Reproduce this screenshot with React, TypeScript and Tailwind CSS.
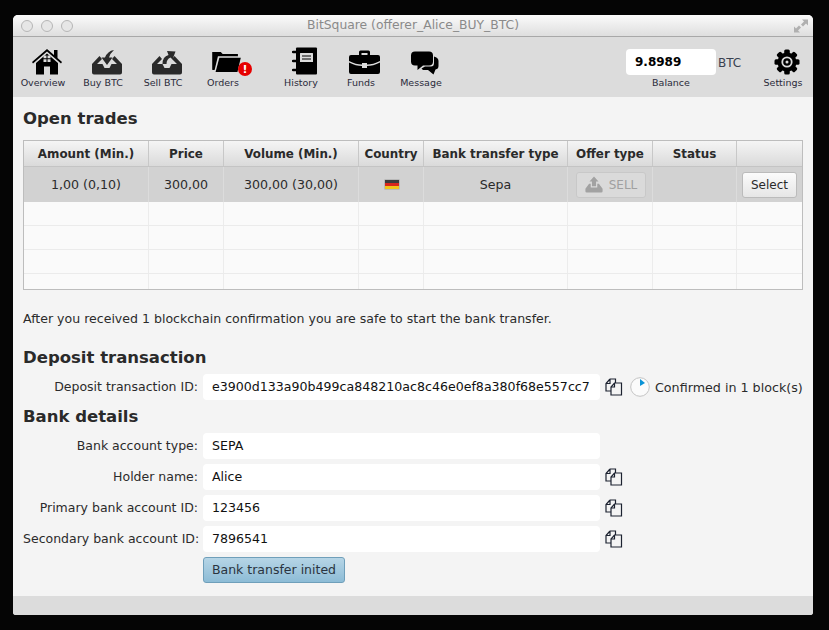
import React from "react";

const font = { fontFamily: '"DejaVu Sans", sans-serif' };

const HomeIcon = () => (
  <svg width="30" height="26" viewBox="0 0 30 26" fill="#000">
    <path d="M15 0 L0 13 L1 14.5 L15 2.5 L29 14.5 L30 13 L25.5 9 V1 H22 V6 Z" />
    <path d="M15 4.5 L4 14 V25.5 H12 V17.5 H18 V25.5 H26 V14 Z" />
    <path d="M11.5 6.5h3v2.7h-3zM15.5 6.5h3v2.7h-3zM11.5 10.2h3v2.7h-3zM15.5 10.2h3v2.7h-3z" fill="#dcdcdc" />
  </svg>
);

const TrayIcon = ({ up }: { up?: boolean }) => (
  <svg width="30" height="25" viewBox="0 0 30 25" fill="#2a2a2a">
    <path d="M7.5 6 L0 14 V22.5 Q0 24.5 2 24.5 H28 Q30 24.5 30 22.5 V14 L22.5 6 L20 9 L25 14 H19.5 L17.5 18 H12.5 L10.5 14 H5 L10 9 Z" />
    {up ? (
      <path d="M10.5 14 Q10.5 6.5 16.5 5 L15 1 L23.5 1.5 L20.5 9.5 L18.5 7.5 Q14.5 9 14.5 14 Z" />
    ) : (
      <path d="M22 0 Q15.5 1 13 7.5 H9.5 L15 15 L20.5 7.5 H17 Q18 3.5 22 0 Z" />
    )}
  </svg>
);

const FolderIcon = () => (
  <svg width="29" height="20" viewBox="0 0 30 21" fill="#000">
    <path d="M0 0 H9 L11 2 H27 V4.5 H6 L2.5 19 H1 Q0 19 0 18 Z" />
    <path d="M7.5 6 H30 L26.5 21 H3.5 Z" />
  </svg>
);

const AlertBadge = () => (
  <div className="flex h-[14px] w-[14px] items-center justify-center rounded-full bg-[#e60000] text-[11px] font-bold leading-none text-white">
    !
  </div>
);

const NotebookIcon = () => (
  <svg width="26" height="28" viewBox="0 0 26 28">
    <path d="M5 0.5 H24 Q25 0.5 25 1.5 V26.5 Q25 27.5 24 27.5 H5 Q4 27.5 4 26.5 V1.5 Q4 0.5 5 0.5 Z" fill="#000" />
    <rect x="8" y="6" width="13" height="9" rx="0.5" fill="#dcdcdc" />
    <path d="M10 9h9M10 12h9" stroke="#000" strokeWidth="1" />
    <path d="M1 5 H5 M1 14 H5 M1 23 H5" stroke="#000" strokeWidth="2.4" strokeLinecap="round" fill="none" />
  </svg>
);

const BriefcaseIcon = () => (
  <svg width="31" height="24" viewBox="0 0 31 24" fill="#000">
    <path d="M10 5 V2 Q10 0.5 11.5 0.5 H19.5 Q21 0.5 21 2 V5 H18.5 V3 H12.5 V5 Z" />
    <path d="M2 5 H29 Q31 5 31 7 V11 Q24 14.5 18 14.5 V13 H13 V14.5 Q7 14.5 0 11 V7 Q0 5 2 5 Z" />
    <path d="M0 12.5 Q7 16 13 16 V18 H18 V16 Q24 16 31 12.5 V22 Q31 24 29 24 H2 Q0 24 0 22 Z" />
  </svg>
);

const ChatIcon = () => (
  <svg width="28" height="24" viewBox="0 0 28 24" fill="#000">
    <path d="M23 5.5 Q27.5 6.5 27.5 10 V15 Q27.5 18 24.5 18.5 L22.5 23.5 L17 19 H12 L10.5 17.5 L14 15.5 H20 Q23 15.5 23 12 Z" />
    <path d="M4 0.5 H18 Q22 0.5 22 4.5 V10.5 Q22 14.5 18 14.5 H12 L6.5 19 L6.5 14.5 H4 Q0 14.5 0 10.5 V4.5 Q0 0.5 4 0.5 Z" />
  </svg>
);

const GearIcon = () => (
  <svg width="26" height="26" viewBox="0 0 26 26">
    <circle cx="13" cy="13" r="9.5" fill="#000" />
    {[0, 45, 90, 135, 180, 225, 270, 315].map((deg) => (
      <rect key={deg} x="10.2" y="0.5" width="5.6" height="6" rx="1.5" fill="#000" transform={`rotate(${deg} 13 13)`} />
    ))}
    <circle cx="13" cy="13" r="5.6" fill="#dcdcdc" />
    <circle cx="13" cy="13" r="3.8" fill="#000" />
    <circle cx="13" cy="13" r="1.5" fill="#dcdcdc" />
  </svg>
);

const CopyIcon = () => (
  <svg width="18" height="18" viewBox="0 0 18 18" fill="none" stroke="#1c2230" strokeWidth="1.2">
    <path d="M5 1 H10.5 V5 M5 1 L1 5.5 V13 H6 M5 1 V5.5 H1" />
    <path d="M9.5 5 H16.5 V17 H6 V9 Z" fill="#f4f4f4" />
    <path d="M9.5 5 V9 H6" />
  </svg>
);

const ProgressIcon = () => (
  <svg width="20" height="20" viewBox="0 0 20 20">
    <circle cx="10" cy="10" r="9.3" fill="#fbfbfb" stroke="#c4c4c4" strokeWidth="1" />
    <path d="M10 2 L15 6 L10 9 Z" fill="#0a93d6" />
  </svg>
);

const UploadIcon = () => (
  <svg width="18" height="17" viewBox="0 0 22 20" preserveAspectRatio="none" fill="#a2a2a2">
    <path d="M11 0.5 L16.5 6.5 H13.5 V12 H8.5 V6.5 H5.5 Z" />
    <path d="M5 9 H7 V13.5 H15 V9 H17 L21.5 15 V18 Q21.5 19.5 20 19.5 H2 Q0.5 19.5 0.5 18 V15 Z" />
  </svg>
);

const Flag = () => (
  <div className="ml-[1px] flex h-[11px] w-[16px] flex-col overflow-hidden rounded-[1px] border border-[#b9b9b9]">
    <div className="h-[3px] bg-[#3a3a3a]" />
    <div className="h-[3px] bg-[#d8261c]" />
    <div className="h-[3px] bg-[#f0c419]" />
  </div>
);

const NavItem = ({ label, icon, className }: { label: string; icon: React.ReactNode; className: string }) => (
  <div className={`flex w-[60px] flex-col items-center ${className}`}>
    <div className="ml-[7px] flex h-[29px] items-end">{icon}</div>
    <div className="mt-[1px] text-[9.5px] leading-[14px] text-[#2a2a3a]">{label}</div>
  </div>
);

const columns = "grid grid-cols-[125px_75px_135px_65px_144px_85px_84px_65px]";
const headers = ["Amount (Min.)", "Price", "Volume (Min.)", "Country", "Bank transfer type", "Offer type", "Status", ""];

const EmptyRow = ({ className }: { className: string }) => (
  <div className={`${columns} ${className} border-b border-[#ebebeb] bg-[#fafafa]`}>
    {headers.map((h, i) => (
      <div key={i} className="border-r border-[#ececec] last:border-r-0" />
    ))}
  </div>
);

const Field = ({ label, value, copy }: { label: string; value: string; copy?: boolean }) => (
  <div className="flex h-[26px] items-center">
    <div className="w-[175px] whitespace-nowrap pt-[1px] text-right text-[12.5px] text-[#2b2b2b]">{label}</div>
    <div className="ml-[5px] flex h-[26px] w-[397px] items-center whitespace-nowrap rounded-[4px] bg-white pl-[9px] pt-[1px] text-[12.6px] text-[#111]">
      {value}
    </div>
    {copy && (
      <div className="ml-[5px] flex">
        <CopyIcon />
      </div>
    )}
  </div>
);

export default function App() {
  return (
    <div className="h-[630px] w-[829px] overflow-hidden bg-[#050505] pl-[13px] pt-[15px]" style={font}>
      <div className="flex h-[600px] w-[800px] flex-col overflow-hidden rounded-t-[5px] rounded-b-[3px] bg-[#f4f4f4]">
        {/* title bar */}
        <div className="relative flex h-[22px] shrink-0 items-center justify-center border-b border-[#a8a8a8] bg-gradient-to-b from-[#fbfbfb] to-[#dedede]">
          <div className="absolute left-[8px] top-[5px] flex gap-[8px]">
            <div className="h-[12px] w-[12px] rounded-full border border-[#b5b5b5] bg-[#e6e6e6]" />
            <div className="h-[12px] w-[12px] rounded-full border border-[#b5b5b5] bg-[#e6e6e6]" />
            <div className="h-[12px] w-[12px] rounded-full border border-[#b5b5b5] bg-[#e6e6e6]" />
          </div>
          <div className="text-[12.35px] text-[#8a8a8a]">BitSquare (offerer_Alice_BUY_BTC)</div>
          <svg className="absolute right-[5px] top-[4px]" width="14" height="14" viewBox="0 0 14 14" fill="#b0b0b0">
            <path d="M8 0.5 H14 V6.5 L12 4.5 L9 7.5 L7 5.5 L10 2.5 Z" />
            <path d="M0 7.5 L2 9.5 L5 6.5 L7 8.5 L4 11.5 L6 13.5 H0 Z" />
          </svg>
        </div>

        {/* toolbar */}
        <div className="flex h-[60px] shrink-0 bg-[#dcdcdc] pt-[9px]">
          <NavItem className="" label="Overview" icon={<HomeIcon />} />
          <NavItem className="" label="Buy BTC" icon={<TrayIcon />} />
          <NavItem className="" label="Sell BTC" icon={<TrayIcon up />} />
          <NavItem
            className=""
            label="Orders"
            icon={
              <div className="relative mb-[3px]">
                <FolderIcon />
                <div className="absolute left-[26px] top-[10px]">
                  <AlertBadge />
                </div>
              </div>
            }
          />
          <NavItem className="ml-[18px]" label="History" icon={<NotebookIcon />} />
          <NavItem
            className=""
            label="Funds"
            icon={
              <div className="mb-[1px] flex">
                <BriefcaseIcon />
              </div>
            }
          />
          <NavItem className="" label="Message" icon={<ChatIcon />} />
          <div className="ml-[175px] flex w-[90px] flex-col items-center pt-[3px]">
            <div className="relative flex h-[26px] w-[90px] items-center rounded-[4px] bg-white pl-[9px] text-[12px] font-bold text-black">
              9.8989
              <div className="absolute left-[92px] top-[5px] text-[12px] font-normal text-[#3a4250]">BTC</div>
            </div>
            <div className="mt-[1px] text-[9.5px] leading-[14px] text-[#2a2a3a]">Balance</div>
          </div>
          <NavItem className="ml-[37px]" label="Settings" icon={<GearIcon />} />
        </div>

        {/* content */}
        <div className="flex-1 px-[10px]">
          <h2 className="mt-[10px] text-[16.5px] font-bold leading-[24px] text-[#2a2a2a]">Open trades</h2>
          <div className="mt-[9px] h-[150px] w-[780px] overflow-hidden border border-[#bdbdbd] bg-[#fafafa]">
            <div className={`${columns} h-[26px] border-b border-[#c4c4c4] bg-gradient-to-b from-[#f5f5f5] to-[#dadada]`}>
              {headers.map((h, i) => (
                <div
                  key={i}
                  className="flex items-center justify-center whitespace-nowrap border-r border-[#c8c8c8] pt-[3px] text-[11.9px] font-bold text-[#2a2a2a] last:border-r-0"
                >
                  {h}
                </div>
              ))}
            </div>
            <div className={`${columns} h-[35px] bg-[#d2d2d2] text-[12.6px] text-[#2a2a2a]`}>
              <div className="flex items-center justify-center border-r border-[#dcdcdc] pt-[1px]">1,00 (0,10)</div>
              <div className="flex items-center justify-center border-r border-[#dcdcdc] pt-[1px]">300,00</div>
              <div className="flex items-center justify-center border-r border-[#dcdcdc] pt-[1px]">300,00 (30,00)</div>
              <div className="flex items-center justify-center border-r border-[#dcdcdc]">
                <Flag />
              </div>
              <div className="flex items-center justify-center border-r border-[#dcdcdc] pt-[1px]">Sepa</div>
              <div className="flex items-center justify-center border-r border-[#dcdcdc]">
                <div className="ml-[2px] flex h-[26px] w-[70px] items-center justify-center gap-[6px] rounded-[3px] border border-[#c8c8c8] bg-[#dadada] text-[12px] text-[#a0a0a0]">
                  <UploadIcon />
                  SELL
                </div>
              </div>
              <div className="border-r border-[#dcdcdc]" />
              <div className="flex items-center justify-center">
                <div className="flex h-[26px] w-[55px] items-center justify-center rounded-[3px] border border-[#bbbbbb] bg-gradient-to-b from-[#fbfbfb] to-[#e6e6e6] text-[12px]">
                  Select
                </div>
              </div>
            </div>
            <EmptyRow className="h-[24px]" />
            <EmptyRow className="h-[24px]" />
            <EmptyRow className="h-[24px]" />
            <EmptyRow className="h-[16px]" />
          </div>
          <p className="mt-[21px] whitespace-nowrap text-[12.55px] leading-[16px] text-[#2b2b2b]">
            After you received 1 blockchain confirmation you are safe to start the bank transfer.
          </p>
          <h2 className="mt-[19px] text-[16.5px] font-bold leading-[24px] text-[#2a2a2a]">Deposit transaction</h2>
          <div className="mt-[4px] flex items-center">
            <Field label="Deposit transaction ID:" value="e3900d133a90b499ca848210ac8c46e0ef8a380f68e557cc7" copy />
            <div className="ml-[7px] flex">
              <ProgressIcon />
            </div>
            <div className="ml-[5px] whitespace-nowrap pt-[1px] text-[12.7px] text-[#2b2b2b]">Confirmed in 1 block(s)</div>
          </div>
          <h2 className="mt-[5px] text-[16.5px] font-bold leading-[24px] text-[#2a2a2a]">Bank details</h2>
          <div className="mt-[4px] flex flex-col gap-[5px]">
            <Field label="Bank account type:" value="SEPA" />
            <Field label="Holder name:" value="Alice" copy />
            <Field label="Primary bank account ID:" value="123456" copy />
            <Field label="Secondary bank account ID:" value="7896541" copy />
          </div>
          <div className="ml-[180px] mt-[5px] flex h-[26px] w-[142px] items-center justify-center rounded-[3px] border border-[#6f9fba] bg-gradient-to-b from-[#b6d5e6] to-[#8dbcd6] text-[12.5px] text-[#2a3440]">
            Bank transfer inited
          </div>
        </div>

        {/* footer */}
        <div className="h-[19px] shrink-0 bg-[#dcdcdc]" />
      </div>
    </div>
  );
}
